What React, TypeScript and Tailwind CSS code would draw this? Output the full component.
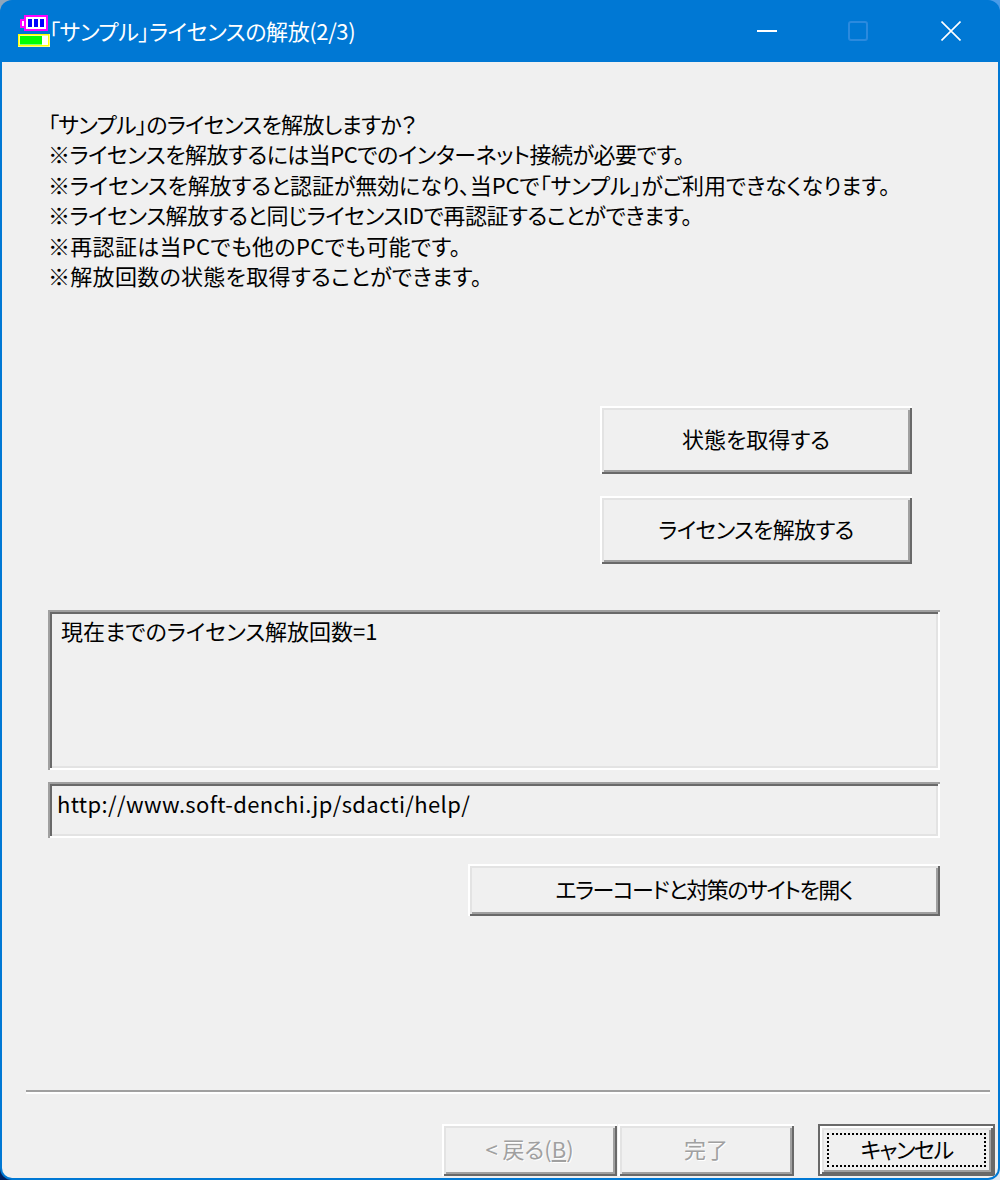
const FONT = "font-['Noto_Sans_CJK_JP','Noto_Sans',sans-serif] [font-feature-settings:'palt']";

const RAISED =
  "shadow-[inset_2px_2px_0_#fff,inset_-2px_-2px_0_#696969,inset_4px_4px_0_#e3e3e3,inset_-4px_-4px_0_#a0a0a0]";
const SUNKEN =
  "shadow-[inset_2px_2px_0_#a0a0a0,inset_-2px_-2px_0_#fff,inset_4px_4px_0_#696969,inset_-4px_-4px_0_#e3e3e3]";

const MESSAGE = [
  { text: "「サンプル」のライセンスを解放しますか？", tracking: "tracking-[-0.7px]" },
  { text: "※ライセンスを解放するには当PCでのインターネット接続が必要です。", tracking: "tracking-[-0.5px]" },
  { text: "※ライセンスを解放すると認証が無効になり、当PCで「サンプル」がご利用できなくなります。", tracking: "tracking-[-0.12px]" },
  { text: "※ライセンス解放すると同じライセンスIDで再認証することができます。", tracking: "tracking-[-0.44px]" },
  { text: "※再認証は当PCでも他のPCでも可能です。", tracking: "tracking-[0.3px]" },
  { text: "※解放回数の状態を取得することができます。", tracking: "tracking-[0.3px]" },
];

function AppIcon() {
  return (
    <svg width="33" height="33" viewBox="0 0 33 33" className="mt-[1px] shrink-0">
      <rect x="3" y="5" width="4" height="7" fill="#fff" stroke="#ff00ff" strokeWidth="2" />
      <rect x="7" y="1" width="22" height="14" fill="#fff" stroke="#ff00ff" strokeWidth="2" />
      <rect x="10" y="4" width="4" height="8" fill="#0000ff" />
      <rect x="16" y="4" width="4" height="8" fill="#0000ff" />
      <rect x="22" y="4" width="4" height="8" fill="#0000ff" />
      <rect x="0" y="19" width="32" height="13" fill="#fff" />
      <rect x="0.75" y="19.75" width="30" height="11" fill="#fff" stroke="#ffff00" strokeWidth="1.5" />
      <rect x="2" y="21" width="22" height="8.5" fill="#00ff00" />
    </svg>
  );
}

function WindowButtons() {
  return (
    <div className="ml-auto flex items-center">
      <svg width="20" height="20" viewBox="0 0 20 20" className="mr-[71px]">
        <rect x="0" y="9" width="20" height="2" fill="#fff" />
      </svg>
      <div className="mr-[73px] h-5 w-5 rounded-[3px] border-2 border-[#2b8ade]" />
      <svg width="20" height="20" viewBox="0 0 20 20" className="mr-[39px]">
        <path d="M0.5 0.5 L19.5 19.5 M19.5 0.5 L0.5 19.5" stroke="#fff" strokeWidth="1.6" fill="none" />
      </svg>
    </div>
  );
}

function Button({ label, className }: { label: string; className: string }) {
  return (
    <div className={`flex items-center justify-center bg-[#f0f0f0] pb-[3px] text-[22px] text-black ${RAISED} ${className}`}>
      {label}
    </div>
  );
}

function NavButton({ children, className }: { children: React.ReactNode; className: string }) {
  return (
    <div
      className={`flex h-[52px] items-center justify-center bg-[#f0f0f0] pb-[4px] text-[22px] text-[#a0a0a0] [text-shadow:1px_1px_0_#fff] ${RAISED} ${className}`}
    >
      {children}
    </div>
  );
}

export default function App() {
  return (
    <div
      className={`h-[1180px] w-[1000px] overflow-hidden bg-[conic-gradient(#4a9be8_0_25%,#dfe8f2_25%_50%,#001f5c_50%_75%,#8fa6bc_75%_100%)] ${FONT}`}
    >
      <div className="flex h-full flex-col overflow-hidden rounded-[12px] bg-[#0078d4]">
        {/* Title bar */}
        <div className="flex h-[62px] shrink-0 items-center pl-[18px] text-white">
          <AppIcon />
          <span className="-ml-[2px] pb-[2px] text-[22px] leading-none tracking-[-0.4px]">
            「サンプル」ライセンスの解放(2/3)
          </span>
          <WindowButtons />
        </div>

        {/* Dialog body */}
        <div className="mx-[2px] mb-[2px] flex min-h-0 flex-1 flex-col overflow-hidden rounded-b-[10px] bg-[#f0f0f0]">
          <div className="pl-[46px] pr-[58px] pt-[46px]">
            <div className="h-[182px] text-[22px] leading-[30.4px] text-black">
              {MESSAGE.map((line) => (
                <p key={line.text} className={`whitespace-nowrap ${line.tracking}`}>
                  {line.text}
                </p>
              ))}
            </div>

            <div className="mt-[116px] flex flex-col items-end gap-[22px] pr-[28px]">
              <Button label="状態を取得する" className="h-[68px] w-[312px]" />
              <Button label="ライセンスを解放する" className="h-[68px] w-[312px] tracking-[-0.7px]" />
            </div>

            <div className={`mt-[46px] h-[160px] bg-[#f0f0f0] px-[13px] py-[5px] text-[22px] leading-[30px] text-black ${SUNKEN}`}>
              現在までのライセンス解放回数=1
            </div>
            <div className={`mt-[12px] h-[56px] bg-[#f0f0f0] px-[9px] py-[6px] text-[22px] leading-[30px] tracking-[0.35px] text-black ${SUNKEN}`}>
              http://www.soft-denchi.jp/sdacti/help/
            </div>

            <div className="mt-[26px] flex justify-end">
              <Button label="エラーコードと対策のサイトを開く" className="h-[52px] w-[472px] tracking-[-1.5px]" />
            </div>
          </div>

          {/* Footer */}
          <div className="mt-auto pb-[2px]">
            <div className="ml-[24px] mr-[8px] h-[4px] border-y-2 border-t-[#a0a0a0] border-b-white" />
            <div className="mt-[30px] flex justify-end gap-[1px] pr-[3px]">
              <NavButton className="w-[175px]">
                {"< 戻る("}
                <span className="underline">B</span>
                {")"}
              </NavButton>
              <NavButton className="w-[176px]">完了</NavButton>
              <div className={`ml-[23px] h-[52px] w-[177px] border-2 border-[#696969] bg-[#f0f0f0] p-[7px] ${RAISED}`}>
                <div className="flex h-full items-center justify-center border-2 border-dotted border-black pb-[3px] text-[22px] tracking-[-1.5px] text-black">
                  キャンセル
                </div>
              </div>
            </div>
          </div>
        </div>
      </div>
    </div>
  );
}
